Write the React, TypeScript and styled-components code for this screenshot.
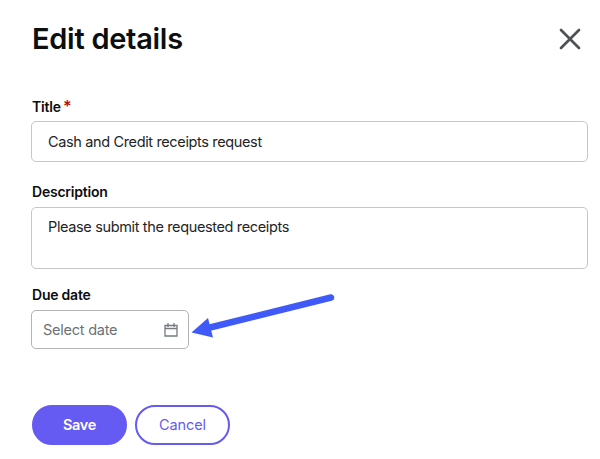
import React from "react";
import styled, { createGlobalStyle } from "styled-components";

const Global = createGlobalStyle`
  * { box-sizing: border-box; }
  body { margin: 0; background: #fff; color: #0c0e10; font-family: Inter, sans-serif; font-size: 14.5px; }
`;
const Dialog = styled.main`
  position: relative; height: 459px; padding: 20px 12px 0 31px; display: flex; flex-direction: column;
`;
const Header = styled.header`
  display: flex; align-items: center; justify-content: space-between; height: 38px; padding-right: 7px;
`;
const Heading = styled.h1`
  margin: 0 0 0 1px; font-size: 29px; line-height: 38px; font-weight: 630; letter-spacing: -0.28px; white-space: nowrap;
`;
const CloseButton = styled.button`
  border: 0; background: none; padding: 0; width: 22px; height: 22px; display: block;
  svg { display: block; }
`;
const Field = styled.div<{ $top: number; $gap?: number }>`
  margin-top: ${p => p.$top}px; display: flex; flex-direction: column; gap: ${p => p.$gap ?? 5}px;
`;
const Label = styled.label`
  font-weight: 640; font-size: 14px; line-height: 18px; letter-spacing: -0.22px; margin-left: 1px;
`;
const Required = styled.span`color: #b80d12; font-size: 16px; line-height: 1; margin-left: -1px;`;
const Box = styled.div<{ $h: number }>`
  height: ${p => p.$h}px; border: 1px solid #c3c7c9; border-radius: 5px; padding: 10px 16px;
  color: #222426; line-height: 20px; letter-spacing: -0.36px;
`;
const TextArea = styled(Box)`padding-top: 9px;`;
const DateBox = styled.div`
  width: 158px; height: 39px; border: 1px solid #b0b4b8; border-radius: 5px; padding: 0 10px 0 11px;
  display: flex; align-items: center; justify-content: space-between; color: #6b7276; letter-spacing: -0.24px;
`;
const Actions = styled.footer`
  display: flex; gap: 8px; margin: 56px 0 0 1px;
`;
const Button = styled.button<{ $primary?: boolean }>`
  width: 95px; height: 40px; border-radius: 20px; border: 2px solid #655af2; padding: 0 0 1px;
  background: ${p => (p.$primary ? "#655af2" : "#fff")}; color: ${p => (p.$primary ? "#fff" : "#655af2")};
  font: ${p => (p.$primary ? 600 : 400)} 14.5px Inter, sans-serif;
  letter-spacing: ${p => (p.$primary ? "-0.3px" : "-0.1px")};
`;
const Arrow = styled.svg`position: absolute; left: 185px; top: 285px;`;

export default function App() {
  return (
    <Dialog>
      <Global />
      <Header>
        <Heading>Edit details</Heading>
        <CloseButton aria-label="Close">
          <svg width="22" height="22" viewBox="0 0 22 22" fill="none" stroke="#4c5256" strokeWidth="2.7" strokeLinecap="round"><path d="M2 2l18 18M20 2L2 20" /></svg>
        </CloseButton>
      </Header>
      <Field $top={40}><Label>Title <Required>*</Required></Label><Box $h={41}>Cash and Credit receipts request</Box></Field>
      <Field $top={21} $gap={6}><Label>Description</Label><TextArea $h={62}>Please submit the requested receipts</TextArea></Field>
      <Field $top={17} $gap={6}><Label>Due date</Label>
        <DateBox>Select date
          <svg width="14" height="14" viewBox="0 0 14 14" fill="none" stroke="#747b80" strokeWidth="1.3"><path d="M1 2.500h12v10.500H1zM1 5.500h12M4 0v4M10 0v4" /></svg>
        </DateBox>
      </Field>
      <Actions><Button $primary>Save</Button><Button>Cancel</Button></Actions>
      <Arrow width="155" height="60" viewBox="185 285 155 60"><path d="M331 297.500L208 328" stroke="#405afa" strokeWidth="6.500" strokeLinecap="round" /><path d="M191.500 332.500l16.500-14.500 5 19.500z" fill="#405afa" /></Arrow>
    </Dialog>
  );
}
